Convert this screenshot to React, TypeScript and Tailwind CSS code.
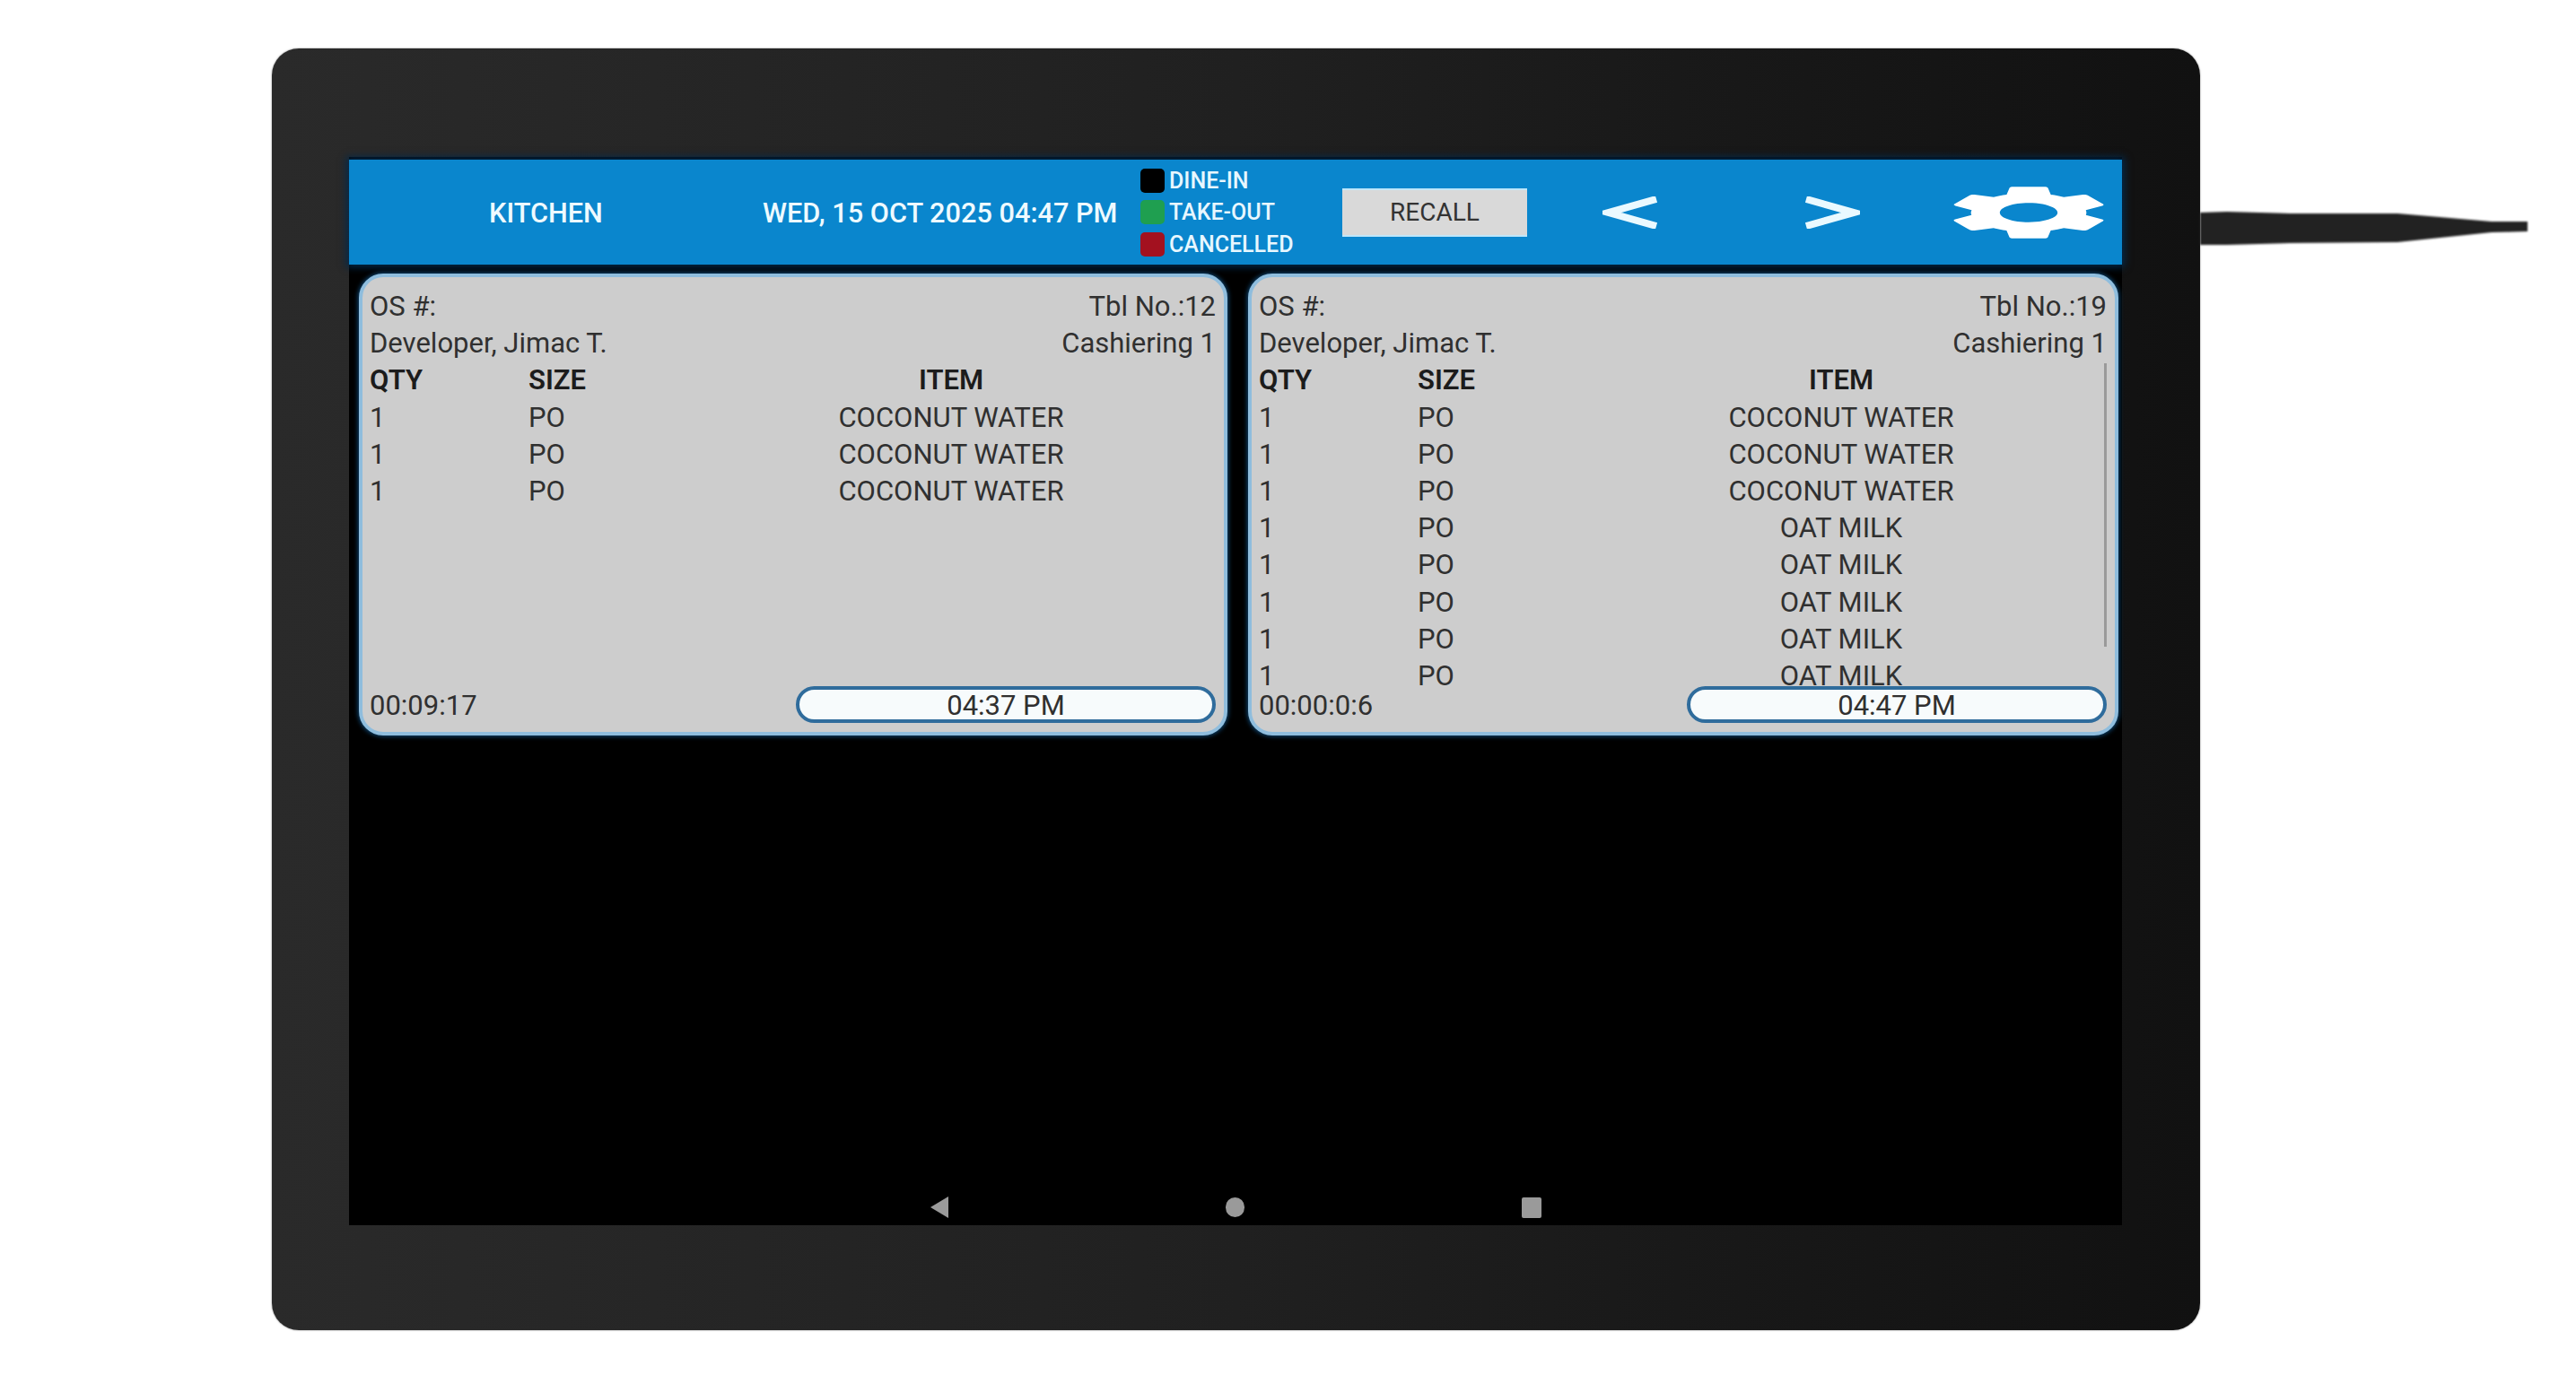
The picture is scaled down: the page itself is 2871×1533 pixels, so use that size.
const fontStack = { fontFamily: "Roboto, 'Liberation Sans', sans-serif" };

type Order = {
    table: string;
    timer: string;
    time: string;
    items: string[];
    scrollbar?: boolean;
};

const orders: Order[] = [
    {
        table: "12",
        timer: "00:09:17",
        time: "04:37 PM",
        items: ["COCONUT WATER", "COCONUT WATER", "COCONUT WATER"],
    },
    {
        table: "19",
        timer: "00:00:0:6",
        time: "04:47 PM",
        items: [
            "COCONUT WATER",
            "COCONUT WATER",
            "COCONUT WATER",
            "OAT MILK",
            "OAT MILK",
            "OAT MILK",
            "OAT MILK",
            "OAT MILK",
        ],
        scrollbar: true,
    },
];

function LegendRow({ swatch, label }: { swatch: string; label: string }) {
    return (
        <div className="flex h-[35.5px] items-center gap-[5px]">
            <span className={`h-[27px] w-[27px] rounded-[5px] ${swatch}`} />
            <span className="text-[25px] font-medium leading-none text-[#e8f7ff]">{label}</span>
        </div>
    );
}

function Chevron({ dir }: { dir: "left" | "right" }) {
    return (
        <svg viewBox="0 0 62 36" preserveAspectRatio="none" className="h-[36px] w-[62px]">
            <polyline
                points={dir === "left" ? "60,3 7,18 60,33" : "2,3 55,18 2,33"}
                fill="none"
                stroke="#eaf9ff"
                strokeWidth="8"
            />
        </svg>
    );
}

function Header() {
    return (
        <div className="mt-[3px] flex h-[117px] shrink-0 items-center bg-[#0a86cd] text-white shadow-[0_0_8px_3px_#04294a]">
            <div className="w-[461px] pl-[156px] pt-[3px] text-[30.7px] font-medium text-[#eefaff]">KITCHEN</div>
            <div className="w-[421px] whitespace-nowrap pt-[3px] text-[30.7px] font-medium text-[#eefaff]">
                WED, 15 OCT 2025 04:47 PM
            </div>
            <div className="flex w-[225px] flex-col">
                <LegendRow swatch="bg-black" label="DINE-IN" />
                <LegendRow swatch="bg-[#1f9f50]" label="TAKE-OUT" />
                <LegendRow swatch="bg-[#a3111f]" label="CANCELLED" />
            </div>
            <div className="flex h-[54px] w-[206px] items-center justify-center border-y-2 border-[#bfe6fa] bg-[#d9d9d9] pt-[1px] text-[28px] text-[#333333]">
                RECALL
            </div>
            <div className="ml-[84px]">
                <Chevron dir="left" />
            </div>
            <div className="ml-[163px]">
                <Chevron dir="right" />
            </div>
            <svg
                viewBox="2.6 2 18.8 20"
                preserveAspectRatio="none"
                className="ml-[104px] h-[60px] w-[168px]"
                fill="#ffffff"
            >
                <path d="M19.14 12.94c.04-.3.06-.61.06-.94 0-.32-.02-.64-.07-.94l2.03-1.58c.18-.14.23-.41.12-.61l-1.92-3.32c-.12-.22-.37-.29-.59-.22l-2.39.96c-.5-.38-1.03-.7-1.62-.94l-.36-2.54c-.04-.24-.24-.41-.48-.41h-3.84c-.24 0-.43.17-.47.41l-.36 2.54c-.59.24-1.13.57-1.62.94l-2.39-.96c-.22-.08-.47 0-.59.22L2.74 8.87c-.12.21-.08.47.12.61l2.03 1.58c-.05.3-.09.63-.09.94s.02.64.07.94l-2.03 1.58c-.18.14-.23.41-.12.61l1.92 3.32c.12.22.37.29.59.22l2.39-.96c.5.38 1.03.7 1.62.94l.36 2.54c.05.24.24.41.48.41h3.84c.24 0 .44-.17.47-.41l.36-2.54c.59-.24 1.13-.56 1.62-.94l2.39.96c.22.08.47 0 .59-.22l1.92-3.32c.12-.22.07-.47-.12-.61l-2.01-1.58zM12 15.6c-1.98 0-3.6-1.62-3.6-3.6s1.62-3.6 3.6-3.6 3.6 1.62 3.6 3.6-1.62 3.6-3.6 3.6z" />
            </svg>
        </div>
    );
}

function OrderCard({ order }: { order: Order }) {
    return (
        <div className="flex h-[515px] flex-col rounded-[27px] border-[4px] border-[#8fbddd] bg-[#cdcdcd] pb-[10px] pl-[8px] pr-[9px] pt-[12px] text-[31px] leading-[41.2px] text-[#303030] shadow-[0_0_5px_1px_#0f4a78]">
            <div className="flex justify-between">
                <span>OS #:</span>
                <span>Tbl No.:{order.table}</span>
            </div>
            <div className="flex justify-between">
                <span>Developer, Jimac T.</span>
                <span>Cashiering 1</span>
            </div>
            <div className="relative min-h-0 flex-1 overflow-hidden">
                <div className="grid grid-cols-[177px_176px_1fr] font-semibold text-[#1c1c1c]">
                    <span>QTY</span>
                    <span>SIZE</span>
                    <span className="text-center">ITEM</span>
                </div>
                {order.items.map((item, i) => (
                    <div key={i} className="grid grid-cols-[177px_176px_1fr]">
                        <span>1</span>
                        <span>PO</span>
                        <span className="text-center">{item}</span>
                    </div>
                ))}
                {order.scrollbar && (
                    <div className="absolute right-0 top-[2px] h-[316px] w-[3px] bg-[#9a9a9a]" />
                )}
            </div>
            <div className="flex h-[41px] shrink-0 items-center justify-between">
                <span className="pt-[2px]">{order.timer}</span>
                <div className="flex h-[41px] w-[468px] items-center justify-center rounded-full border-[4px] border-[#2f6c9c] bg-[#f7fbfc] pt-[2px] leading-none">
                    {order.time}
                </div>
            </div>
        </div>
    );
}

function NavBar() {
    return (
        <div className="mt-auto flex items-center justify-center gap-[309px] pb-[8px]">
            <svg viewBox="0 0 20 24" className="h-[24px] w-[20px]">
                <polygon points="20,0 20,24 0,12" fill="#9a9a9a" />
            </svg>
            <div className="h-[22px] w-[21px] rounded-full bg-[#9a9a9a]" />
            <div className="h-[23px] w-[22px] rounded-[2px] bg-[#9a9a9a]" />
        </div>
    );
}

export default function App() {
    return (
        <div className="h-[1533px] w-full overflow-hidden bg-white pl-[303px] pt-[54px]" style={fontStack}>
            <div className="relative h-[1429px] w-[2149px] rounded-[30px] bg-gradient-to-r from-[#2a2a2a] via-[#202020] to-[#111111] pl-[86px] pt-[121px] shadow-[0_0_2px_#777777]">
                <div className="flex h-[1191px] w-[1976px] flex-col bg-black">
                    <Header />
                    <div className="grid grid-cols-[968px_970px] gap-[23px] pl-[11px] pt-[10px]">
                        {orders.map((o) => (
                            <OrderCard key={o.table} order={o} />
                        ))}
                    </div>
                    <NavBar />
                </div>
                {/* power cable on the right side of the tablet */}
                <svg
                    viewBox="0 0 365 38"
                    className="absolute left-full top-[181px] h-[38px] w-[365px] blur-[1px]"
                >
                    <path
                        d="M0 2 L30 1 L100 3 L220 3 L325 12 L365 12 L365 23 L325 24 L220 35 L100 36 L30 38 L0 38 Z"
                        fill="#222222"
                    />
                </svg>
            </div>
        </div>
    );
}
